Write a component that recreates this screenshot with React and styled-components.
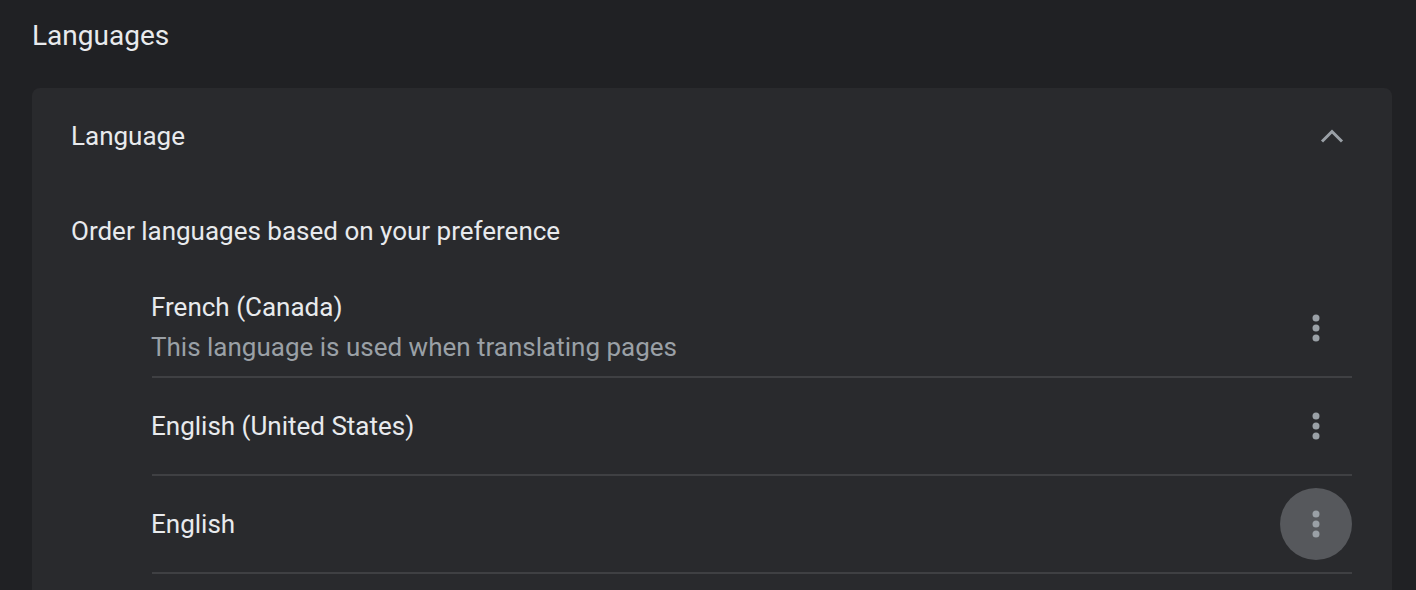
import React from 'react';
import styled, { createGlobalStyle } from 'styled-components';

const GlobalStyle = createGlobalStyle`
  html, body {
    margin: 0;
    padding: 0;
    background: #202124;
    font-family: Roboto, "Liberation Sans", sans-serif;
    -webkit-font-smoothing: antialiased;
  }
`;

const Page = styled.main`
  padding: 0 24px 0 32px;
  height: 590px;
  overflow: hidden;
`;

const PageTitle = styled.h1`
  margin: 0 0 32px;
  padding-top: 16px;
  font-size: 28px;
  line-height: 40px;
  font-weight: 400;
  color: #e8eaed;
`;

const Card = styled.section`
  background: #292a2d;
  border-radius: 8px;
  width: 1360px;
  padding-bottom: 40px;
`;

const CardHeader = styled.div`
  display: flex;
  align-items: center;
  justify-content: space-between;
  height: 96px;
  padding: 0 40px 0 39px;
`;

const HeaderLabel = styled.span`
  font-size: 26px;
  color: #e8eaed;
`;

const IconButton = styled.button`
  display: flex;
  align-items: center;
  justify-content: center;
  width: ${p => p.$size || 40}px;
  height: ${p => p.$size || 40}px;
  padding: 0;
  border: none;
  border-radius: 50%;
  background: ${p => (p.$hover ? '#56585c' : 'transparent')};
  color: #9aa0a6;
  cursor: pointer;
  flex-shrink: 0;
`;

const Body = styled.div`
  padding: 0 40px 0 39px;
`;

const Subtitle = styled.div`
  font-size: 26px;
  line-height: 40px;
  color: #e8eaed;
  margin: 27px 0 29px;
`;

const List = styled.ul`
  list-style: none;
  margin: 0;
  padding: 0 0 0 81px;
`;

const Row = styled.li`
  display: flex;
  align-items: center;
  justify-content: space-between;
  min-height: 96px;
  border-bottom: 2px solid #3f4043;
`;

const RowText = styled.div`
  display: flex;
  flex-direction: column;
  margin-left: -1px;
  margin-top: ${p => (p.$twoLine ? '-2px' : '0')};
`;

const Primary = styled.span`
  font-size: 26px;
  line-height: 40px;
  color: #e8eaed;
`;

const Secondary = styled.span`
  font-size: 26px;
  line-height: 40px;
  color: #9aa0a6;
`;

const ChevronUp = () => (
  <svg width="24" height="16" viewBox="0 0 24 16">
    <polyline points="2,13.5 12,3.5 22,13.5" fill="none" stroke="currentColor" strokeWidth="3" />
  </svg>
);

const Kebab = () => (
  <svg width="10" height="30" viewBox="0 0 10 30">
    <circle cx="5" cy="5" r="3.5" fill="currentColor" />
    <circle cx="5" cy="15" r="3.5" fill="currentColor" />
    <circle cx="5" cy="25" r="3.5" fill="currentColor" />
  </svg>
);

const languages = [
  { name: 'French (Canada)', note: 'This language is used when translating pages' },
  { name: 'English (United States)' },
  { name: 'English', hover: true },
];

const App = () => (
  <>
    <GlobalStyle />
    <Page>
      <PageTitle>Languages</PageTitle>
      <Card>
        <CardHeader>
          <HeaderLabel>Language</HeaderLabel>
          <IconButton aria-label="Collapse">
            <ChevronUp />
          </IconButton>
        </CardHeader>
        <Body>
          <Subtitle>Order languages based on your preference</Subtitle>
          <List>
            {languages.map(lang => (
              <Row key={lang.name}>
                <RowText $twoLine={!!lang.note}>
                  <Primary>{lang.name}</Primary>
                  {lang.note && <Secondary>{lang.note}</Secondary>}
                </RowText>
                <IconButton $size={72} $hover={lang.hover} aria-label="More actions">
                  <Kebab />
                </IconButton>
              </Row>
            ))}
          </List>
        </Body>
      </Card>
    </Page>
  </>
);

export default App;
